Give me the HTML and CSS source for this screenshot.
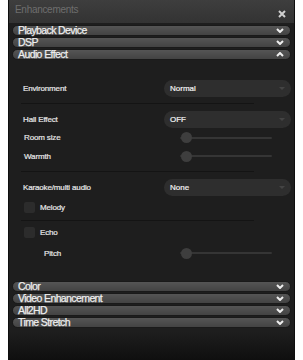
FILE: index.html
```html
<!DOCTYPE html>
<html lang="en">
<head>
  <meta charset="UTF-8">
  <title>Enhancements</title>
  <link rel="stylesheet" href="styles.css">
</head>
<body>
  <div class="window">
    <div class="titlebar">
      <span class="title">Enhancements</span>
      <svg class="close" width="8" height="8" viewBox="0 0 8 8"><path d="M1 1L7 7M7 1L1 7" stroke="#d0d0d0" stroke-width="2"/></svg>
    </div>

    <div class="sections top">
      <div class="section-head"><span>Playback Device</span><svg class="chev" width="8" height="5" viewBox="0 0 8 5"><path d="M1 1L4 4L7 1" fill="none" stroke="#eee" stroke-width="2"/></svg></div>
      <div class="section-head"><span>DSP</span><svg class="chev" width="8" height="5" viewBox="0 0 8 5"><path d="M1 1L4 4L7 1" fill="none" stroke="#eee" stroke-width="2"/></svg></div>
      <div class="section-head"><span>Audio Effect</span><svg class="chev" width="8" height="5" viewBox="0 0 8 5"><path d="M1 4L4 1L7 4" fill="none" stroke="#eee" stroke-width="2"/></svg></div>
    </div>

    <div class="panel">
      <div class="row">
        <span class="label">Environment</span>
        <div class="select"><span>Normal</span><span class="arrow"></span></div>
      </div>
      <div class="sep"></div>
      <div class="row">
        <span class="label">Hall Effect</span>
        <div class="select"><span>OFF</span><span class="arrow"></span></div>
      </div>
      <div class="row row-sub">
        <span class="label">Room size</span>
        <div class="slider"><span class="knob"></span></div>
      </div>
      <div class="row row-sub">
        <span class="label">Warmth</span>
        <div class="slider"><span class="knob"></span></div>
      </div>
      <div class="sep"></div>
      <div class="row">
        <span class="label">Karaoke/multi audio</span>
        <div class="select"><span>None</span><span class="arrow"></span></div>
      </div>
      <div class="row row-check row-melody">
        <span class="check"></span>
        <span class="label">Melody</span>
      </div>
      <div class="sep sep-tight"></div>
      <div class="row row-check">
        <span class="check"></span>
        <span class="label">Echo</span>
      </div>
      <div class="row row-pitch">
        <span class="label">Pitch</span>
        <div class="slider"><span class="knob"></span></div>
      </div>
    </div>

    <div class="sections">
      <div class="section-head"><span>Color</span><svg class="chev" width="8" height="5" viewBox="0 0 8 5"><path d="M1 1L4 4L7 1" fill="none" stroke="#eee" stroke-width="2"/></svg></div>
      <div class="section-head"><span>Video Enhancement</span><svg class="chev" width="8" height="5" viewBox="0 0 8 5"><path d="M1 1L4 4L7 1" fill="none" stroke="#eee" stroke-width="2"/></svg></div>
      <div class="section-head"><span>All2HD</span><svg class="chev" width="8" height="5" viewBox="0 0 8 5"><path d="M1 1L4 4L7 1" fill="none" stroke="#eee" stroke-width="2"/></svg></div>
      <div class="section-head"><span>Time Stretch</span><svg class="chev" width="8" height="5" viewBox="0 0 8 5"><path d="M1 1L4 4L7 1" fill="none" stroke="#eee" stroke-width="2"/></svg></div>
    </div>
  </div>
</body>
</html>
```

FILE: styles.css
```css
body {
  margin: 0;
  background-color: #ffffff;
  font-family: "Liberation Sans", Arial, sans-serif;
}
.window {
  margin-left: 8px;
  width: 287px;
  height: 360px;
  background: linear-gradient(to bottom, #1e1e1e 0%, #1e1e1e 92%, #0f0f0f 100%);
  box-sizing: border-box;
  border-left: 1px solid #0e0e0e;
  border-right: 1px solid #0e0e0e;
}
.titlebar {
  height: 23px;
  display: flex;
  justify-content: space-between;
  align-items: flex-start;
  background: linear-gradient(to bottom, #3e3e3e, #333333);
  padding: 0 8px 0 6px;
}
.title {
  color: #6e6e6e;
  font-size: 10px;
  letter-spacing: -0.3px;
  margin-top: 4px;
}
.close {
  margin-top: 10px;
}
.sections {
  padding: 0 3px;
}
.sections.top {
  padding-top: 2px;
}
.section-head {
  height: 9px;
  margin-bottom: 1px;
  display: flex;
  justify-content: space-between;
  align-items: center;
  padding: 0 6px 0 5px;
  border: 1px solid #1a1a1a;
  border-radius: 6px;
  background: linear-gradient(to bottom, #555555, #434343);
  color: #eeeeee;
  font-size: 10.5px;
  letter-spacing: -0.6px;
  line-height: 9px;
  -webkit-text-stroke: 0.25px #eeeeee;
}
.panel {
  padding: 19px 3px 19px 14px;
}
.row {
  display: flex;
  align-items: center;
  justify-content: space-between;
  height: 18px;
}
.row:first-child {
  height: 17px;
}
.label {
  color: #e8e8e8;
  font-size: 8px;
  letter-spacing: -0.15px;
  -webkit-text-stroke: 0.2px #e8e8e8;
}
.row-sub .label {
  margin-left: 1px;
}
.row-sub {
  height: 19px;
}
.row-sub + .row-sub {
  height: 18px;
}
.select {
  width: 127px;
  height: 17px;
  box-sizing: border-box;
  border-radius: 9px;
  background-color: #2e2e2e;
  display: flex;
  align-items: center;
  justify-content: space-between;
  padding: 0 6px;
  color: #f2f2f2;
  font-size: 8px;
  -webkit-text-stroke: 0.2px #f2f2f2;
}
.arrow {
  width: 0;
  height: 0;
  border-left: 3px solid transparent;
  border-right: 3px solid transparent;
  border-top: 3px solid #444444;
}
.slider {
  width: 92px;
  height: 2px;
  margin-right: 19px;
  background-color: #353535;
  border-radius: 1px;
  display: flex;
  align-items: center;
}
.knob {
  width: 11px;
  height: 11px;
  border-radius: 50%;
  background-color: #3e3e3e;
  margin-left: 1px;
}
.sep {
  height: 1px;
  width: 233px;
  margin: 6px 0 6px -2px;
  background-color: #141414;
}
.sep-tight {
  margin: 3px 0 3px -2px;
}
.row-check {
  justify-content: flex-start;
  height: 17px;
}
.row-melody {
  margin-top: 1px;
  height: 20px;
}
.check {
  width: 11px;
  height: 11px;
  margin-left: 1px;
  margin-right: 5px;
  border-radius: 2px;
  background-color: #2c2c2c;
}
.row-pitch {
  margin-top: 3px;
}
.row-pitch .label {
  margin-left: 21px;
}
```
